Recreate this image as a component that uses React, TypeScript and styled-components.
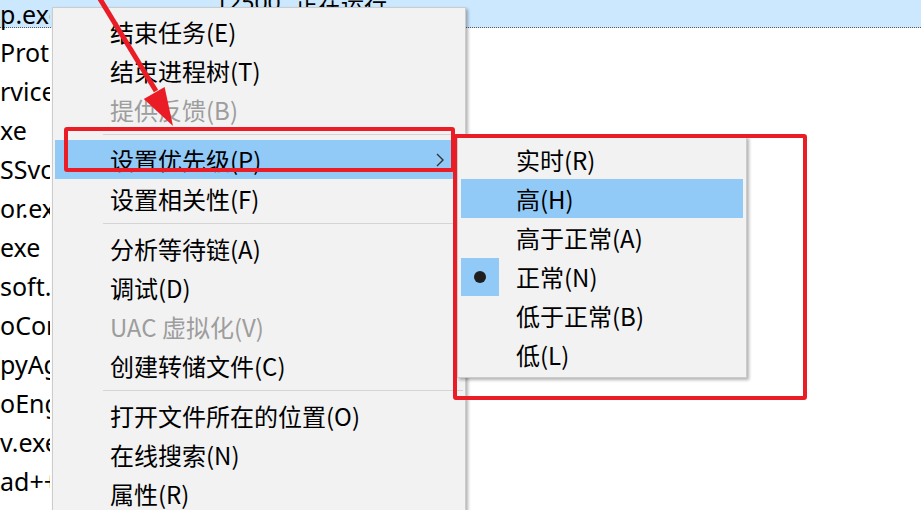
import styled, { createGlobalStyle } from "styled-components";

const GlobalStyle = createGlobalStyle`
  html, body {
    margin: 0;
    padding: 0;
    background: #ffffff;
  }
  body {
    font-family: "Noto Sans", "Noto Sans CJK SC", sans-serif;
  }
`;

const Screen = styled.div`
  position: relative;
  width: 921px;
  height: 510px;
  overflow: hidden;
  background: #ffffff;
`;

const ProcessList = styled.div`
  display: flex;
  flex-direction: column;
`;

const ProcessRow = styled.div<{ $selected?: boolean }>`
  display: grid;
  grid-template-columns: 215px 80px 1fr;
  align-items: center;
  box-sizing: border-box;
  height: ${({ $selected }) => ($selected ? 28 : 39)}px;
  padding-top: ${({ $selected }) => ($selected ? 0 : 9)}px;
  background: ${({ $selected }) => ($selected ? "#cce8ff" : "transparent")};
  border-bottom: ${({ $selected }) =>
    $selected ? "1px dotted #5a5a5a" : "none"};
  font-size: 25px;
  color: #000;
`;

const NameCell = styled.div`
  width: 50px;
  overflow: hidden;
  white-space: nowrap;
`;

const TopCell = styled.div`
  align-self: flex-start;
  margin-top: -14px;
  white-space: nowrap;
  font-size: 23px;
`;

const ContextMenu = styled.div`
  position: absolute;
  left: 52px;
  top: 7px;
  width: 414px;
  box-sizing: border-box;
  padding: 4px 0;
  background: #f2f2f2;
  border: 1px solid #cccccc;
  box-shadow: 2px 2px 3px rgba(0, 0, 0, 0.3);
  font-family: "Noto Sans CJK SC", "Noto Sans", sans-serif;
  font-size: 24px;
`;

const SubMenu = styled(ContextMenu)`
  left: 457px;
  top: 136px;
  width: 290px;
  padding: 3px 0;
`;

const MenuItem = styled.div<{ $active?: boolean; $disabled?: boolean }>`
  display: flex;
  align-items: center;
  height: 39px;
  margin: 0 2px;
  background: ${({ $active }) => ($active ? "#91c9f7" : "transparent")};
  color: ${({ $disabled }) => ($disabled ? "#9d9d9d" : "#000000")};
  white-space: nowrap;
`;

const SubItem = styled(MenuItem)`
  margin: 0 3px;
`;

const Check = styled.div<{ $on?: boolean }>`
  display: flex;
  align-items: center;
  justify-content: center;
  width: 38px;
  height: 38px;
  flex-shrink: 0;
  background: ${({ $on }) => ($on ? "#91c9f7" : "transparent")};
`;

const Bullet = styled.span`
  width: 12px;
  height: 12px;
  border-radius: 50%;
  background: #1e1e1e;
`;

const Label = styled.span`
  margin-left: 17px;
  line-height: 1;
`;

const Chevron = styled.svg`
  margin-left: auto;
  margin-right: 19px;
`;

const Separator = styled.div`
  display: flex;
  align-items: center;
  height: 11px;
  margin: 0 2px 0 50px;

  &::after {
    content: "";
    flex: 1;
    height: 1px;
    background: #d4d4d4;
  }
`;

const Annotation = styled.div<{ $x: number; $y: number; $w: number; $h: number }>`
  position: absolute;
  left: ${({ $x }) => $x}px;
  top: ${({ $y }) => $y}px;
  width: ${({ $w }) => $w}px;
  height: ${({ $h }) => $h}px;
  box-sizing: border-box;
  border: 4px solid #ea1d27;
  border-radius: 3px;
`;

const ArrowLayer = styled.svg`
  position: absolute;
  left: 0;
  top: 0;
  pointer-events: none;
`;

const rows = [
  "p.exe",
  "Protect",
  "rvice",
  "xe",
  "SSvc.exe",
  "or.exe",
  "exe",
  "soft.Photos",
  "oCore",
  "pyAgent",
  "oEngine",
  "v.exe",
  "ad++",
  "ollo",
];

type Entry =
  | { label: string; disabled?: boolean; active?: boolean; sub?: boolean }
  | "sep";

const mainMenu: Entry[] = [
  { label: "结束任务(E)" },
  { label: "结束进程树(T)" },
  { label: "提供反馈(B)", disabled: true },
  "sep",
  { label: "设置优先级(P)", active: true, sub: true },
  { label: "设置相关性(F)" },
  "sep",
  { label: "分析等待链(A)" },
  { label: "调试(D)" },
  { label: "UAC 虚拟化(V)", disabled: true },
  { label: "创建转储文件(C)" },
  "sep",
  { label: "打开文件所在的位置(O)" },
  { label: "在线搜索(N)" },
  { label: "属性(R)" },
];

const priorities = [
  { label: "实时(R)" },
  { label: "高(H)", active: true },
  { label: "高于正常(A)" },
  { label: "正常(N)", checked: true },
  { label: "低于正常(B)" },
  { label: "低(L)" },
];

const App = () => {
  return (
    <Screen>
      <GlobalStyle />
      <ProcessList>
        {rows.map((name, i) => (
          <ProcessRow key={name} $selected={i === 0}>
            <NameCell>{name}</NameCell>
            {i === 0 && <TopCell>12500</TopCell>}
            {i === 0 && <TopCell>正在运行</TopCell>}
          </ProcessRow>
        ))}
      </ProcessList>

      <ContextMenu>
        {mainMenu.map((item, i) =>
          item === "sep" ? (
            <Separator key={i} />
          ) : (
            <MenuItem key={i} $active={item.active} $disabled={item.disabled}>
              <Check />
              <Label>{item.label}</Label>
              {item.sub && (
                <Chevron width="8" height="14" viewBox="0 0 8 14">
                  <polyline
                    points="1,1 7,7 1,13"
                    fill="none"
                    stroke="#333"
                    strokeWidth="1.4"
                  />
                </Chevron>
              )}
            </MenuItem>
          )
        )}
      </ContextMenu>

      <SubMenu>
        {priorities.map((p) => (
          <SubItem key={p.label} $active={p.active}>
            <Check $on={p.checked}>{p.checked && <Bullet />}</Check>
            <Label>{p.label}</Label>
          </SubItem>
        ))}
      </SubMenu>

      <Annotation $x={64} $y={127} $w={391} $h={45} />
      <Annotation $x={453} $y={134} $w={354} $h={266} />

      <ArrowLayer width="921" height="510" viewBox="0 0 921 510">
        <line x1="97" y1="-6" x2="156" y2="91" stroke="#ea1d27" strokeWidth="5" />
        <polygon points="173,126 143.8,98.9 164.6,87.1" fill="#ea1d27" />
      </ArrowLayer>
    </Screen>
  );
};

export default App;
